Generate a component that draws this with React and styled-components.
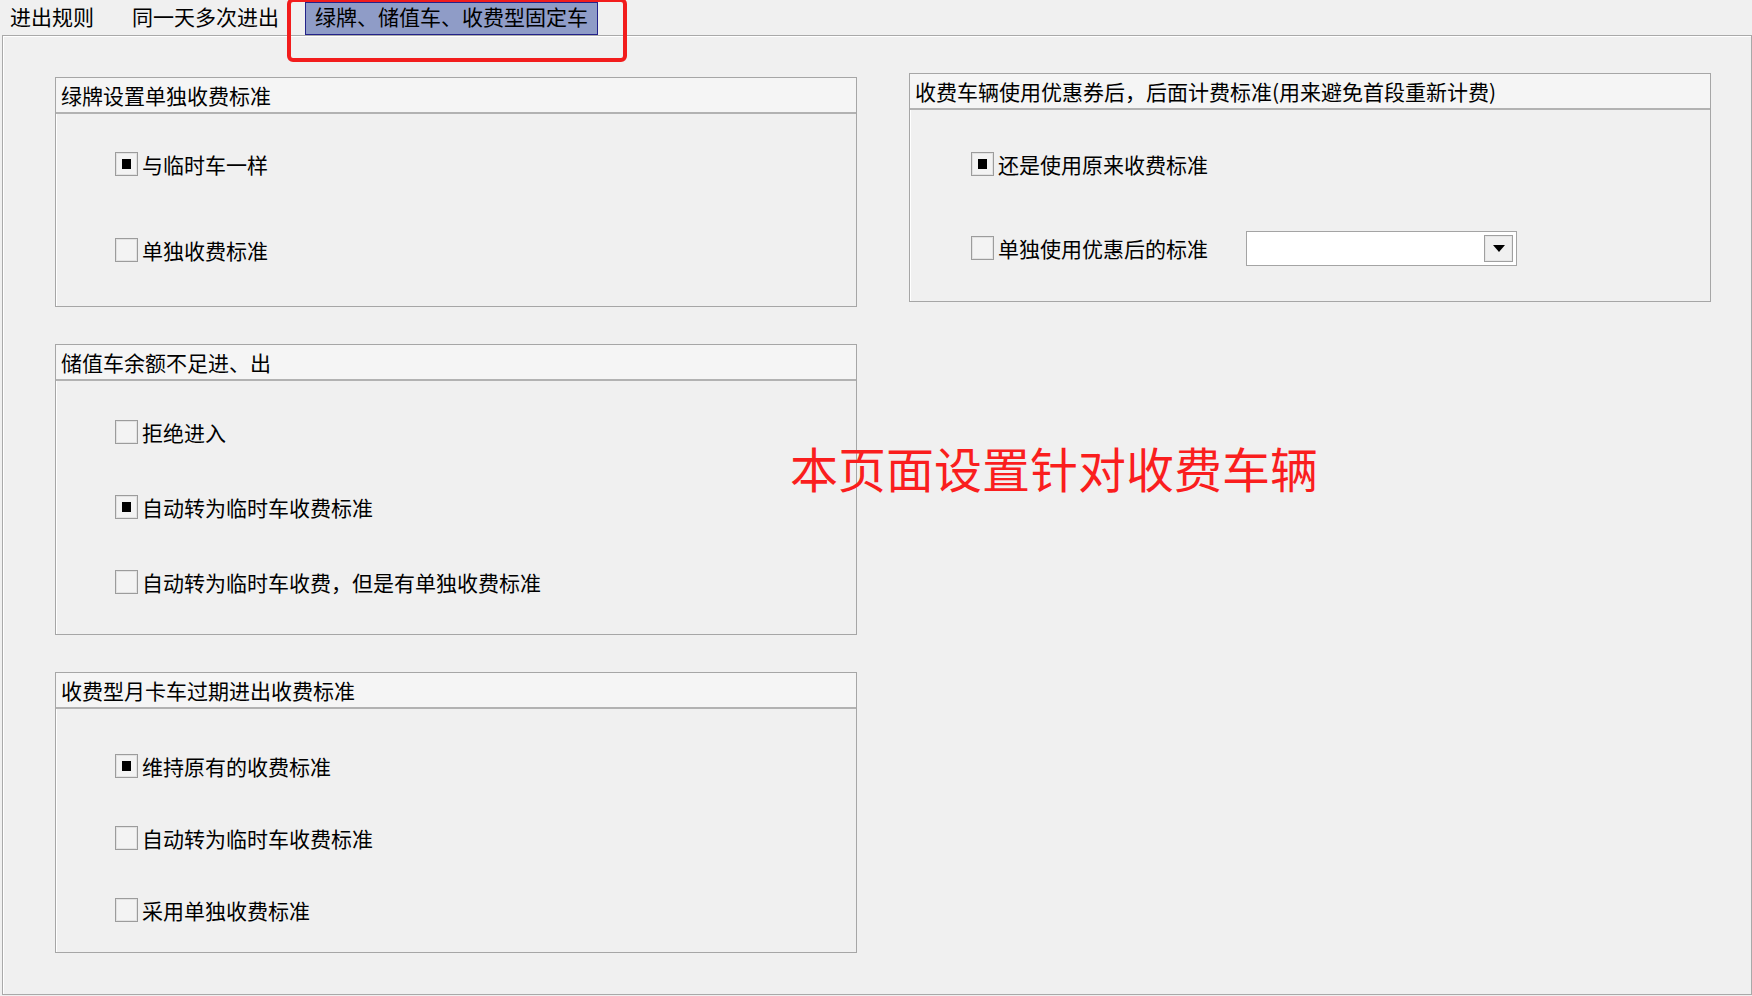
import styled, { createGlobalStyle } from "styled-components";

const Global = createGlobalStyle`
    html, body {
        margin: 0;
        background: #f0f0f0;
    }
    body {
        font-family: "Noto Sans CJK SC", "Noto Sans", sans-serif;
        color: #000;
    }
`;

const Page = styled.div`
    position: relative;
    width: 1752px;
    height: 996px;
    background: #f0f0f0;
    overflow: hidden;
`;

const TabBar = styled.div`
    display: flex;
    align-items: flex-end;
    height: 35px;
`;

const Tab = styled.div`
    box-sizing: border-box;
    height: 33px;
    margin-left: ${(props) => props.space || 0}px;
    padding: 0 9px;
    font-size: 21px;
    line-height: 27px;
    white-space: nowrap;
    border: 1px solid ${(props) => (props.active ? "#23238a" : "transparent")};
    background: ${(props) => (props.active ? "#8f9cc7" : "transparent")};
`;

const Highlight = styled.div`
    position: absolute;
    left: 287px;
    top: -2px;
    width: 340px;
    height: 64px;
    box-sizing: border-box;
    border: 4px solid #f21c1c;
    border-radius: 6px;
    pointer-events: none;
`;

const Panel = styled.div`
    box-sizing: border-box;
    margin-left: 2px;
    height: 960px;
    border: 1px solid #a9a9a9;
    box-shadow: inset 1px 1px 0 #fff;
    display: grid;
    grid-template-columns: 802px 802px;
    column-gap: 52px;
    align-items: start;
    padding: 41px 0 0 52px;
`;

const Column = styled.div`
    display: flex;
    flex-direction: column;
    gap: ${(props) => props.gap || 0}px;
    margin-top: ${(props) => props.shift || 0}px;
`;

const Group = styled.section`
    box-sizing: border-box;
    height: ${(props) => props.height}px;
    border: 1px solid #a6a6a6;
    box-shadow: inset 1px 1px 0 #fff;
    display: flex;
    flex-direction: column;
`;

const GroupTitle = styled.div`
    height: 36px;
    flex: 0 0 36px;
    box-sizing: border-box;
    padding-left: 5px;
    font-size: 21px;
    line-height: 34px;
    white-space: nowrap;
    background: #f5f5f5;
    border-bottom: 2px solid #b2b2b2;
`;

const GroupBody = styled.div`
    display: flex;
    flex-direction: column;
    gap: ${(props) => props.gap}px;
    padding-top: ${(props) => props.top}px;
    padding-left: ${(props) => props.left || 59}px;
`;

const Row = styled.label`
    display: flex;
    align-items: center;
    height: 24px;
    font-size: 21px;
    white-space: nowrap;
`;

const Box = styled.span`
    box-sizing: border-box;
    flex: 0 0 23px;
    width: 23px;
    height: 24px;
    margin-right: 4px;
    border: 1px solid #9c9c9c;
    box-shadow: inset 0 0 0 1px #e2e2e2;
    background: #f3f3f3;
    display: flex;
    align-items: center;
    justify-content: center;
    &::after {
        content: "";
        width: 9px;
        height: 10px;
        background: ${(props) => (props.checked ? "#000" : "transparent")};
    }
`;

const Combo = styled.div`
    box-sizing: border-box;
    margin-left: 38px;
    width: 271px;
    height: 35px;
    border: 1px solid #a4a4a4;
    background: #fff;
    display: flex;
    justify-content: flex-end;
    align-items: center;
    padding-right: 3px;
`;

const DropButton = styled.div`
    box-sizing: border-box;
    width: 29px;
    height: 27px;
    border: 1px solid #a0a0a0;
    box-shadow: inset 0 0 0 1px #e6e6e6;
    background: #f0f0f0;
    display: flex;
    align-items: center;
    justify-content: center;
`;

const Note = styled.div`
    position: absolute;
    left: 790px;
    top: 443px;
    font-size: 48px;
    line-height: 48px;
    color: #fa1e1e;
    white-space: nowrap;
`;

function Check({ checked, children }) {
    return (
        <Row>
            <Box checked={checked} />
            {children}
        </Row>
    );
}

export default function App() {
    return (
        <Page>
            <Global />
            <TabBar>
                <Tab>进出规则</Tab>
                <Tab space={18}>同一天多次进出</Tab>
                <Tab space={16} active>绿牌、储值车、收费型固定车</Tab>
            </TabBar>
            <Highlight />
            <Panel>
                <Column gap={37}>
                    <Group height={230}>
                        <GroupTitle>绿牌设置单独收费标准</GroupTitle>
                        <GroupBody top={38} gap={62}>
                            <Check checked>与临时车一样</Check>
                            <Check>单独收费标准</Check>
                        </GroupBody>
                    </Group>
                    <Group height={291}>
                        <GroupTitle>储值车余额不足进、出</GroupTitle>
                        <GroupBody top={39} gap={51}>
                            <Check>拒绝进入</Check>
                            <Check checked>自动转为临时车收费标准</Check>
                            <Check>自动转为临时车收费，但是有单独收费标准</Check>
                        </GroupBody>
                    </Group>
                    <Group height={281}>
                        <GroupTitle>收费型月卡车过期进出收费标准</GroupTitle>
                        <GroupBody top={45} gap={48}>
                            <Check checked>维持原有的收费标准</Check>
                            <Check>自动转为临时车收费标准</Check>
                            <Check>采用单独收费标准</Check>
                        </GroupBody>
                    </Group>
                </Column>
                <Column shift={-4}>
                    <Group height={229}>
                        <GroupTitle>收费车辆使用优惠券后，后面计费标准(用来避免首段重新计费)</GroupTitle>
                        <GroupBody top={42} gap={60} left={61}>
                            <Check checked>还是使用原来收费标准</Check>
                            <Row>
                                <Box />
                                单独使用优惠后的标准
                                <Combo>
                                    <DropButton>
                                        <svg width="12" height="7" viewBox="0 0 12 7">
                                            <path d="M0 0 H12 L6 7 Z" fill="#000" />
                                        </svg>
                                    </DropButton>
                                </Combo>
                            </Row>
                        </GroupBody>
                    </Group>
                </Column>
            </Panel>
            <Note>本页面设置针对收费车辆</Note>
        </Page>
    );
}
